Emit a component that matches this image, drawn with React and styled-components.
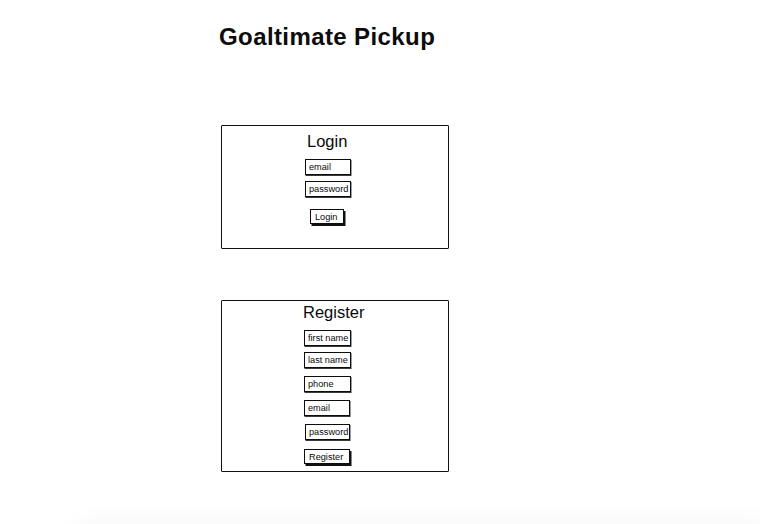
import React from "react";
import styled, { createGlobalStyle } from "styled-components";

const Global = createGlobalStyle`
  html, body { margin: 0; padding: 0; background: #fff; overflow: hidden; }
  body { font-family: "Liberation Sans", Arial, sans-serif; color: #111; }
`;

const Page = styled.div`
  width: 760px;
  height: 524px;
  padding: 22px 0 0 219px;
  box-sizing: border-box;
  display: flex;
  flex-direction: column;
  align-items: flex-start;
  overflow: hidden;
`;

const Title = styled.h1`
  margin: 0;
  flex-shrink: 0;
  font-family: "Liberation Sans", Arial, sans-serif;
  font-weight: 700;
  font-size: 24px;
  line-height: 29px;
  letter-spacing: 0.4px;
  color: #0c0c0c;
`;

const Panel = styled.section`
  box-sizing: border-box;
  flex-shrink: 0;
  width: 228px;
  height: ${(p) => p.$h}px;
  margin-top: ${(p) => p.$top}px;
  margin-left: 2px;
  border: 1.5px solid #111;
  border-radius: 1px;
  padding: ${(p) => p.$pad}px 0 0 0;
  display: flex;
  flex-direction: column;
  align-items: flex-start;
`;

const Heading = styled.h2`
  margin: 0 0 0 ${(p) => p.$left}px;
  font-family: "Liberation Sans", Arial, sans-serif;
  font-weight: 400;
  font-size: 16.5px;
  line-height: 20px;
  color: #0a0a0a;
`;

const Field = styled.div`
  box-sizing: border-box;
  flex-shrink: 0;
  width: ${(p) => p.$w}px;
  height: 16px;
  margin: ${(p) => p.$top}px 0 0 ${(p) => p.$left}px;
  border: 1.5px solid #0d0d0d;
  box-shadow: 0.5px 1px 0 #3a3a3a;
  background: #fff;
  padding-left: 3px;
  display: flex;
  align-items: center;
  font-size: 9.2px;
  color: #0a0a0a;
  white-space: nowrap;
`;

const Button = styled.div`
  box-sizing: border-box;
  flex-shrink: 0;
  width: ${(p) => p.$w}px;
  height: 15px;
  margin: ${(p) => p.$top}px 0 0 ${(p) => p.$left}px;
  border: 1.5px solid #0d0d0d;
  box-shadow: 1.5px 2px 0 #111;
  background: #fff;
  padding-left: ${(p) => p.$pad}px;
  display: flex;
  align-items: center;
  font-size: 9.2px;
  color: #0a0a0a;
  white-space: nowrap;
`;

const Shelf = styled.div`
  flex-shrink: 0;
  margin-top: 61px;
  margin-left: -135px;
  width: 676px;
  height: 40px;
  background: #f6f6f6;
  border-radius: 30px;
  box-shadow: 0 0 24px 16px #f8f8f8;
`;

export default function App() {
  return (
    <>
      <Global />
      <Page>
        <Title>Goaltimate Pickup</Title>
        <Panel $top={74} $h={124} $pad={5}>
          <Heading $left={85}>Login</Heading>
          <Field $w={46} $left={83} $top={8}>email</Field>
          <Field $w={46} $left={83} $top={6}>password</Field>
          <Button $w={34} $left={88} $top={12} $pad={4}>Login</Button>
        </Panel>
        <Panel $top={51} $h={172} $pad={1}>
          <Heading $left={81}>Register</Heading>
          <Field $w={47} $left={82} $top={8}>first name</Field>
          <Field $w={47} $left={82} $top={6}>last name</Field>
          <Field $w={47} $left={82} $top={8}>phone</Field>
          <Field $w={46} $left={82} $top={8}>email</Field>
          <Field $w={45} $left={83} $top={8}>password</Field>
          <Button $w={46} $left={82} $top={9} $pad={4}>Register</Button>
        </Panel>
        <Shelf />
      </Page>
    </>
  );
}
